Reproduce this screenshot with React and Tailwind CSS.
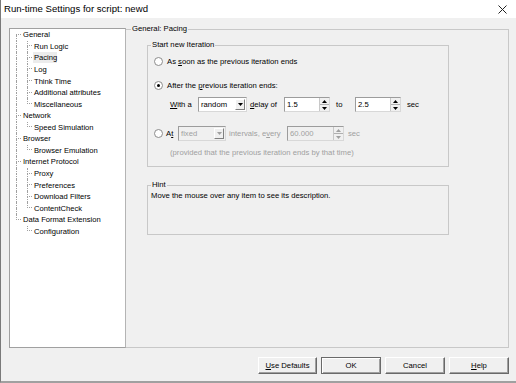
import React from 'react';

// Tree data for the left settings navigator
const tree = [
  { label: 'General', children: ['Run Logic', 'Pacing', 'Log', 'Think Time', 'Additional attributes', 'Miscellaneous'] },
  { label: 'Network', children: ['Speed Simulation'] },
  { label: 'Browser', children: ['Browser Emulation'] },
  { label: 'Internet Protocol', children: ['Proxy', 'Preferences', 'Download Filters', 'ContentCheck'] },
  { label: 'Data Format Extension', children: ['Configuration'] },
];

const line = 'border-dotted border-[#a0a0a0]';

function Gutter({ wide, up, down, stub }) {
  return (
    <div className={`flex flex-col shrink-0 self-stretch ${wide ? 'w-[12px] pl-[6px]' : 'w-[11px] pl-[5px]'}`}>
      <div className={`h-1/2 w-[5px] ${line} ${up ? 'border-l' : ''} ${stub ? 'border-b' : ''}`} />
      <div className={`flex-1 ${line} ${down ? 'border-l' : ''}`} />
    </div>
  );
}

function Tree() {
  const rows = [];
  tree.forEach((node, i) => {
    const first = i === 0;
    const last = i === tree.length - 1;
    rows.push(
      <div key={node.label} className="flex h-[11.57px] items-center">
        <Gutter wide up={!first} down={!last} stub />
        <span className="pl-[1px] leading-[11px] whitespace-nowrap">{node.label}</span>
      </div>
    );
    node.children.forEach((c, j) => {
      const lastChild = j === node.children.length - 1;
      rows.push(
        <div key={node.label + c} className="flex h-[11.57px] items-center">
          <Gutter wide up={!last} down={!last} />
          <Gutter up down={!lastChild} stub />
          <span className={`pl-[1px] leading-[11px] whitespace-nowrap ${c === 'Pacing' ? 'bg-[#ececec]' : ''}`}>{c}</span>
        </div>
      );
    });
  });
  return (
    <div className="ml-[8px] mt-[10px] w-[117px] h-[320px] bg-white border border-[#a0a0a0] border-r-[#b4b4b4] text-[7.6px] text-black">
      {rows}
    </div>
  );
}

function Radio({ checked }) {
  return (
    <span className="w-[9px] h-[9px] rounded-full border border-[#8c8c8c] bg-white flex items-center justify-center shrink-0">
      {checked && <span className="w-[3px] h-[3px] rounded-full bg-black" />}
    </span>
  );
}

function Arrow({ up, color = '#000' }) {
  return (
    <svg width="5" height="3" viewBox="0 0 5 3">
      <path d={up ? 'M0 3 L2.5 0 L5 3Z' : 'M0 0 L5 0 L2.5 3Z'} fill={color} />
    </svg>
  );
}

function Spin({ value, className, disabled }) {
  return (
    <div className={`flex h-[15px] border border-[#9c9c9c] border-b-[#d8d8d8] border-r-[#d8d8d8] ${disabled ? 'bg-[#f0f0f0] text-[#a0a0a0]' : 'bg-white'} ${className}`}>
      <div className="flex-1 pl-[2px] leading-[13px]">{value}</div>
      <div className="w-[10px] flex flex-col bg-[#f0f0f0] border-l border-[#c8c8c8]">
        <div className="flex-1 flex items-center justify-center border-b border-[#b0b0b0]">
          <Arrow up color={disabled ? '#a0a0a0' : '#000'} />
        </div>
        <div className="flex-1 flex items-center justify-center">
          <Arrow color={disabled ? '#a0a0a0' : '#000'} />
        </div>
      </div>
    </div>
  );
}

function Combo({ value, className, disabled }) {
  return (
    <div className={`flex h-[15px] border border-[#9c9c9c] border-b-[#d8d8d8] border-r-[#d8d8d8] ${disabled ? 'bg-[#f0f0f0] text-[#a0a0a0]' : 'bg-white'} ${className}`}>
      <div className="flex-1 pl-[2px] leading-[13px]">{value}</div>
      <div className="w-[10px] my-[1px] mr-[1px] flex items-center justify-center bg-[#f0f0f0] border border-t-white border-l-white border-r-[#808080] border-b-[#808080]">
        <Arrow color={disabled ? '#a0a0a0' : '#000'} />
      </div>
    </div>
  );
}

function Btn({ children, def, className }) {
  return (
    <div
      className={`h-[17px] flex items-center justify-center bg-[#f0f0f0] border ${
        def
          ? 'border-[#6a6a6a] shadow-[inset_1px_1px_#fff,inset_-1px_-1px_#a0a0a0]'
          : 'border-t-white border-l-white border-r-[#696969] border-b-[#696969] shadow-[inset_-1px_-1px_#a0a0a0]'
      } ${className}`}
    >
      {children}
    </div>
  );
}

export default function App() {
  return (
    <div className="w-[516px] h-[383px] flex flex-col bg-[#f0f0f0] border-l border-[#7a7a7a] border-b-2 border-b-[#a0a0a0] font-['Liberation_Sans',Arial,sans-serif] text-black overflow-hidden">
      {/* Title bar */}
      <div className="h-[18px] bg-white flex items-center pl-[3px] pr-[9px] shrink-0">
        <span className="text-[9.6px] leading-none">Run-time Settings for script: newd</span>
        <svg className="ml-auto" width="9" height="9" viewBox="0 0 9 9">
          <path d="M0.5 0.5 L8.5 8.5 M8.5 0.5 L0.5 8.5" stroke="#222" strokeWidth="1" />
        </svg>
      </div>

      {/* Tree + settings page */}
      <div className="flex items-start">
        <Tree />
        <fieldset className="mt-[6px] w-[383px] h-[324px] border border-l-0 border-[#c8c8c8] text-[7.7px] leading-[10px]">
          <legend className="ml-[5px] px-[1px] leading-[10px]">General: Pacing</legend>

          <fieldset className="mt-[6px] ml-[21px] w-[302px] border border-[#c8c8c8] pb-[7px]">
            <legend className="ml-[3px] px-[1px] leading-[10px]">Start new Iteration</legend>

            <div className="mt-[6px] pl-[6px] flex items-center gap-[4px] h-[11px]">
              <Radio />
              <span>As <span className="underline">s</span>oon as the previous iteration ends</span>
            </div>

            <div className="mt-[13px] pl-[6px] flex items-center gap-[4px] h-[11px]">
              <Radio checked />
              <span>After the <span className="underline">p</span>revious iteration ends:</span>
            </div>

            <div className="mt-[6px] pl-[22px] flex items-center h-[15px]">
              <span className="w-[28px]"><span className="underline">W</span>ith a</span>
              <Combo value="random" className="w-[49px]" />
              <span className="ml-[3px] w-[34px]"><span className="underline">d</span>elay of</span>
              <Spin value="1.5" className="w-[46px]" />
              <span className="ml-[6px] w-[19px]">to</span>
              <Spin value="2.5" className="w-[46px]" />
              <span className="ml-[6px]">sec</span>
            </div>

            <div className="mt-[14px] pl-[6px] flex items-center h-[15px]">
              <Radio />
              <span className="ml-[3px] w-[12px]">A<span className="underline">t</span></span>
              <Combo value="fixed" disabled className="w-[48px]" />
              <span className="ml-[3px] w-[58px] text-[#a0a0a0]">intervals, e<span className="underline">v</span>ery</span>
              <Spin value="60.000" disabled className="w-[57px]" />
              <span className="ml-[4px] text-[#a0a0a0]">sec</span>
            </div>

            <div className="mt-[7px] pl-[22px] h-[11px] text-[#a0a0a0]">
              (provided that the previous iteration ends by that time)
            </div>
          </fieldset>

          <fieldset className="mt-[13px] ml-[21px] w-[302px] h-[55px] border border-[#c8c8c8]">
            <legend className="ml-[3px] px-[1px] leading-[10px]">Hint</legend>
            <div className="pl-[3px] pt-[1px]">Move the mouse over any item to see its description.</div>
          </fieldset>
        </fieldset>
      </div>

      {/* Dialog buttons */}
      <div className="mt-[9px] pr-[7px] flex justify-end gap-[4px] text-[7.7px]">
        <Btn className="w-[59px]"><span><span className="underline">U</span>se Defaults</span></Btn>
        <Btn def className="w-[60px]">OK</Btn>
        <Btn className="w-[60px]">Cancel</Btn>
        <Btn className="w-[60px]"><span><span className="underline">H</span>elp</span></Btn>
      </div>
    </div>
  );
}
